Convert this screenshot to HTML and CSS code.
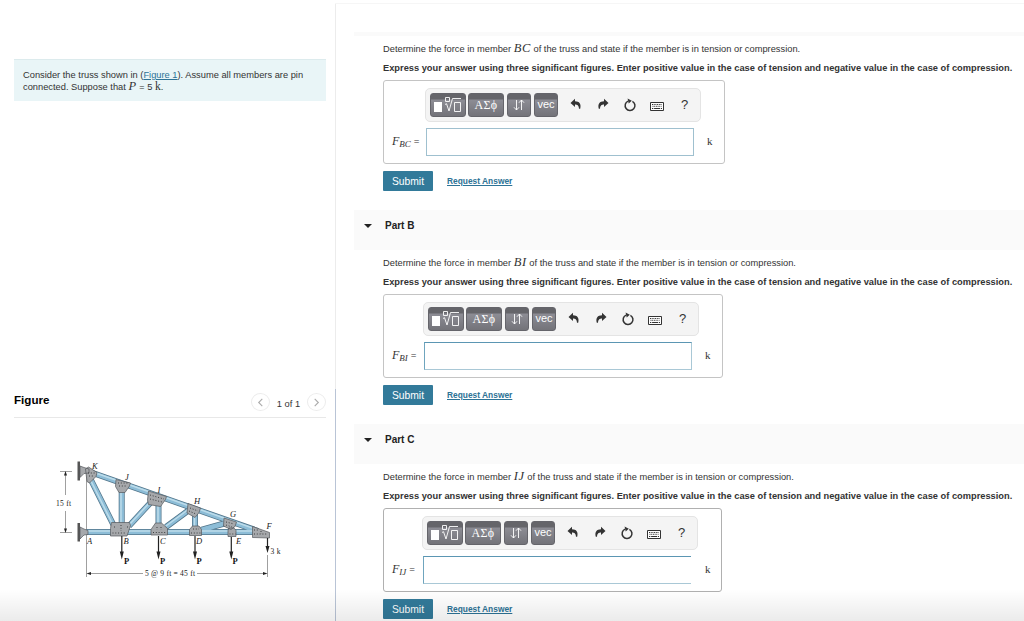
FILE: index.html
```html
<!DOCTYPE html>
<html lang="en">
<head>
<meta charset="utf-8">
<title>Truss</title>
<link rel="stylesheet" href="styles.css">
</head>
<body>
<svg width="0" height="0" class="defs" aria-hidden="true">
  <symbol id="undo" viewBox="0 0 12 12"><path d="M5 0.8 0.5 5 5 9V6.6c2.300 0 3.700.8 4 4.200h1.200C11.500 6 9.300 3.300 5 3.300z"/></symbol>
  <symbol id="redo" viewBox="0 0 12 12"><path d="M7 .8 11.500 5 7 9V6.600c-2.300 0-3.700.8-4 4.200H1.800C.5 6 2.700 3.300 7 3.300z"/></symbol>
  <symbol id="reset" viewBox="0 0 14 14"><path d="M9.400 3.300a4.900 4.900 0 1 1-4.300-.2" fill="none" stroke="currentColor" stroke-width="1.500"/><path d="M4.600.6 8.800 2.700 5.700 5.600z"/></symbol>
  <symbol id="keys" viewBox="0 0 14 9"><path d="M.5.5h13v8H.5z" fill="#fff" stroke="currentColor"/><path d="M2 2.500h10M2.500 4.300h9" fill="none" stroke="currentColor" stroke-dasharray="1 .7"/><path d="M2 6.500h1.300m.8 0H10m.8 0H12" fill="none" stroke="currentColor"/></symbol>
  <symbol id="root" viewBox="0 0 28 18"><path d="M0 6h8v10H0z"/><path d="M11.500 1.500h4v4h-4zM20.500 6.500h6v9h-6zM11 8.500l1.500-.8 2.500 7.300 3.500-12.500H27" fill="none" stroke="currentColor" stroke-width=".9"/></symbol>
  <symbol id="swap" viewBox="0 0 12 14"><path d="M3.500 2v10M1 9.300 3.500 12 6 9.300M8.500 12V2M6 4.700 8.500 2 11 4.700" fill="none" stroke="currentColor" stroke-width=".9"/></symbol>
</svg>
<div class="page">
  <aside class="side">
    <div class="problem">Consider the truss shown in (<a href="#">Figure 1</a>). Assume all members are pin<br>connected. Suppose that <i class="math">P</i> <span class="eq">=</span> 5 <span class="unit-in">k</span>.</div>
    <div class="figure-head">
      <h2>Figure</h2>
      <span class="nav"><svg viewBox="0 0 10 10"><path d="M7 1 3 5l4 4"/></svg></span>
      <span class="count">1 of 1</span>
      <span class="nav"><svg viewBox="0 0 10 10"><path d="M3 1l4 4-4 4"/></svg></span>
    </div>
    <svg class="truss" viewBox="50 455 240 130">
      <g class="thin"><path d="M86.500 471V577M267.500 555V577M60 471.500h12M60 532.500h12M65.500 474v21M65.500 511v18M89 573.500h54M197 573.500h68"/></g>
      <g class="tips"><path d="M65.500 471l-1.500 4.500h3zM65.500 533l-1.500-4.500h3zM86.500 573.500l4.500-1.500v3zM267.500 573.500l-4.500-1.500v3z"/></g>
      <g class="edge"><path d="M90 472 258 531M86 532H256M90 478 114 526M121.700 488V526M129 526 153 500M158.500 505V526M166 527 189 510M195 514V528M201 530 226 523M231 525V530"/></g>
      <g class="beam"><path d="M90 472 258 531M86 532H256M90 478 114 526M121.700 488V526M129 526 153 500M158.500 505V526M166 527 189 510M195 514V528M201 530 226 523M231 525V530"/></g>
      <g class="shine"><path d="M90 471 258 530M86 531H256M89.500 478 113.500 526M121 488V526M129 525 153 499M158 505V526M166 526 189 509M194.500 514V528"/></g>
      <g class="wall"><path d="M77.500 461.500h2.500v19h-2.500zM77.500 523h2.500v18.500h-2.500z"/></g>
      <g class="plate">
        <path d="M80 466l4 1.500 5 1.500v4l-5 .5-4 4zM80 527l4 2 4 1.500v4l-4 .5-4 4zM85.500 469l3-2 8.500 5.500-1 4-6.500 6.500-2.500-1.500zM116 479.500l14.500 3.500-1 3-4.500 6.500h-6l-3.500-6zM148.500 491l18 5.500-1 3-5 7-12-2-1-4.500zM188 503.500l12.500 4.500-1.500 4.500-4 5-8-4.500zM224 518l12.500 4-1.500 4.500-4 3-7.500-3.500zM111.500 522.500h18l1 3-3.500 10.500h-16.500v-7.500zM155.500 523h6l6 5.500v6.500h-16.500v-5.500zM192.500 526h6.500l2.500 3.500v6h-12v-6zM229 528h5l2 2.500v6h-8v-6zM252.500 526.500l17 6v5.500l-17-.5z"/>
      </g>
      <g class="bolts"><path d="M88 473h7M89 476h5M118 483h11M119 486h8M150 495l14 4M150 499l12 3M190 508l8 3M189 511l7 3M226 522l8 2M226 525l6 2M112.500 533h14M114 527h1M121 525v6M127 527h1M153 532.500h13M157 527v3M161 527v3M191 533h10M193 529h6M229.500 534h6M254 530h4M254 534h14M261 531v3"/></g>
      <g class="load"><path d="M121.800 536v17M158.500 536v17M195 536v17M231.300 537v16M267.500 538v9"/></g>
      <g class="tips"><path d="M119.800 551.500h4l-2 8zM156.500 551.500h4l-2 8zM193 551.500h4l-2 8zM229.300 551.500h4l-2 8zM265.500 546h4l-2 7z"/></g>
      <g class="names"><text x="92" y="469">K</text><text x="125" y="480">J</text><text x="157.500" y="492.500">I</text><text x="194" y="504">H</text><text x="230" y="517">G</text><text x="266.500" y="528.500">F</text><text x="87" y="543.500">A</text><text x="123.500" y="543.500">B</text><text x="160" y="543.500">C</text><text x="196" y="543.500">D</text><text x="236" y="543.500">E</text></g>
      <g class="force"><text x="124" y="564">P</text><text x="160" y="564">P</text><text x="196.500" y="564">P</text><text x="232.500" y="564">P</text></g>
      <g class="dims"><text x="56" y="505.500" textLength="15">15 ft</text><text x="270.500" y="554" textLength="10">3 k</text><text x="145" y="576" textLength="50">5 @ 9 ft = 45 ft</text></g>
    </svg>
  </aside>
  <main class="main" id="main">
    <div class="rule"></div>
    <section class="part part-a">
      <p class="ask">Determine the force in member <i class="math">BC</i> of the truss and state if the member is in tension or compression.</p>
      <p class="hint">Express your answer using three significant figures. Enter positive value in the case of tension and negative value in the case of compression.</p>
      <div class="box">
        <div class="label"><i>F<sub>BC</sub></i> <span>=</span></div>
        <div class="entry">
          <div class="tools"><b class="btn wide"><svg class="i-root"><use href="#root"/></svg></b><b class="btn wide greek">ΑΣϕ</b><b class="btn"><svg class="i-swap"><use href="#swap"/></svg></b><b class="btn vec">vec</b><svg class="ic undo"><use href="#undo"/></svg><svg class="ic redo"><use href="#redo"/></svg><svg class="ic reset"><use href="#reset"/></svg><svg class="ic keys"><use href="#keys"/></svg><span class="help">?</span></div>
          <div class="field"></div>
        </div>
        <span class="unit">k</span>
      </div>
      <div class="actions"><button>Submit</button><a href="#">Request Answer</a></div>
    </section>
    <header class="part-head"><span class="caret"></span><h3>Part B</h3></header>
    <section class="part part-b">
      <p class="ask">Determine the force in member <i class="math">BI</i> of the truss and state if the member is in tension or compression.</p>
      <p class="hint">Express your answer using three significant figures. Enter positive value in the case of tension and negative value in the case of compression.</p>
      <div class="box">
        <div class="label"><i>F<sub>BI</sub></i> <span>=</span></div>
        <div class="entry">
          <div class="tools"><b class="btn wide"><svg class="i-root"><use href="#root"/></svg></b><b class="btn wide greek">ΑΣϕ</b><b class="btn"><svg class="i-swap"><use href="#swap"/></svg></b><b class="btn vec">vec</b><svg class="ic undo"><use href="#undo"/></svg><svg class="ic redo"><use href="#redo"/></svg><svg class="ic reset"><use href="#reset"/></svg><svg class="ic keys"><use href="#keys"/></svg><span class="help">?</span></div>
          <div class="field"></div>
        </div>
        <span class="unit">k</span>
      </div>
      <div class="actions"><button>Submit</button><a href="#">Request Answer</a></div>
    </section>
    <header class="part-head"><span class="caret"></span><h3>Part C</h3></header>
    <section class="part part-c">
      <p class="ask">Determine the force in member <i class="math">IJ</i> of the truss and state if the member is in tension or compression.</p>
      <p class="hint">Express your answer using three significant figures. Enter positive value in the case of tension and negative value in the case of compression.</p>
      <div class="box">
        <div class="label"><i>F<sub>IJ</sub></i> <span>=</span></div>
        <div class="entry">
          <div class="tools"><b class="btn wide"><svg class="i-root"><use href="#root"/></svg></b><b class="btn wide greek">ΑΣϕ</b><b class="btn"><svg class="i-swap"><use href="#swap"/></svg></b><b class="btn vec">vec</b><svg class="ic undo"><use href="#undo"/></svg><svg class="ic redo"><use href="#redo"/></svg><svg class="ic reset"><use href="#reset"/></svg><svg class="ic keys"><use href="#keys"/></svg><span class="help">?</span></div>
          <div class="field"></div>
        </div>
        <span class="unit">k</span>
      </div>
      <div class="actions"><button>Submit</button><a href="#">Request Answer</a></div>
    </section>
  </main>
  <div class="fade"></div>
</div>
</body>
</html>
```
FILE: styles.css
```css
* { box-sizing: border-box; }
body { margin: 0; background: #fff; color: #333; font: 9.3px "Liberation Sans", sans-serif; overflow: hidden; }
h2, h3, p { margin: 0; }
a { color: #2d7396; }
.defs { position: absolute; }
.page { position: relative; display: flex; height: 621px; padding-top: 3px; overflow: hidden; }

.side { width: 336px; padding-left: 14px; border-image: linear-gradient(#ececec 386px, #b9c4d6 386px) 1; border-style: solid; border-width: 0 1px 0 0; display: flex; flex-direction: column; }
.problem { width: 312px; height: 42px; margin-top: 56px; padding: 10px 9px; background: #e9f5f7; border-top: 1px solid #dcebed; line-height: 11px; white-space: nowrap; }
.math { font: italic 12.500px/10px "Liberation Serif", serif; letter-spacing: .6px; }
.unit-in { font: 11.500px/10px "Liberation Serif", serif; }
.eq { font-size: 9px; }
.figure-head { display: flex; width: 312px; height: 30px; margin-top: 287px; padding-bottom: 1px; border-bottom: 1px solid #e8e8e8; align-items: center; }
.figure-head h2 { flex: 1; color: #000; font-size: 11.600px; line-height: 12px; margin-top: -4px; }
.nav { width: 19px; height: 18px; border: 1px solid #ececec; border-radius: 50%; display: flex; align-items: center; justify-content: center; }
.nav svg { width: 9px; height: 9px; fill: none; stroke: #aaa; stroke-width: 1.200; }
.count { width: 37px; text-align: center; padding-top: 3px; }
.truss { width: 240px; height: 130px; margin: 37px 0 0 36px; font-family: "Liberation Serif", serif; }
.thin { stroke: #777; stroke-width: .7; fill: none; }
.edge { stroke: #52758a; stroke-width: 6; fill: none; }
.beam { stroke: #8dbdd7; stroke-width: 4.500; fill: none; }
.shine { stroke: #bddcea; stroke-width: 1.500; fill: none; }
.wall { fill: #555; }
.plate { fill: #a6a8ab; stroke: #55585b; stroke-width: .7; }
.bolts { stroke: #3d3f41; stroke-width: 1; stroke-dasharray: 1 1.800; fill: none; }
.load { stroke: #222; stroke-width: 1.200; }
.tips { fill: #222; }
.names { font-size: 8.500px; font-style: italic; fill: #222; }
.force { font-size: 8.500px; font-weight: bold; fill: #111; }
.dims { font-size: 7.500px; fill: #222; }

.main { flex: 1; min-width: 0; padding-left: 19px; border-top: 1px solid #f6f6f6; margin-left: -1px; }
.rule { height: 4px; margin-top: 28px; background: #fafafa; }
.part { height: 174px; padding-left: 29px; white-space: nowrap; }
.ask { padding-top: 7px; line-height: 12px; height: 22px; }
.hint { font-weight: bold; line-height: 12px; height: 22px; padding-top: 4px; font-size: 9.290px; }
.box { display: flex; height: 84px; width: 342px; border: 1px solid #c4c4c4; border-radius: 3px; }
.label { width: 42px; padding: 53px 0 0 8px; font: 12px/14px "Liberation Serif", serif; }
.label span { font-size: 10px; }
.label sub { font-size: 9px; line-height: 0; vertical-align: -2px; }
.tools { display: flex; width: 276px; height: 34px; margin: 7px 0 6px -1px; padding: 4px 0 0 4px; background: #f4f4f4; border: 1px solid #e4e4e4; border-radius: 5px; }
.btn { width: 24px; height: 24px; margin-right: 3px; border: 1px solid #65656b; border-radius: 3px; background: linear-gradient(#65656a 22%, #8c8c94 28%, #737379); color: #fff; font-weight: normal; font-size: 11px; line-height: 21px; text-align: center; display: flex; align-items: center; justify-content: center; }
.vec { padding-bottom: 2px; }
.wide { width: 36px; margin-right: 2px; }
.greek { font-family: "Liberation Serif", serif; font-size: 12px; letter-spacing: .3px; margin-right: 3px; -webkit-font-smoothing: antialiased; }
.i-root { width: 28px; height: 18px; fill: #fff; color: #fff; }
.i-swap { width: 12px; height: 14px; }
.ic { fill: #333; color: #333; }
.undo, .redo { width: 12px; height: 12px; margin: 5px 0 0 9px; }
.redo { margin-left: 15px; }
.reset { width: 14px; height: 14px; margin: 5px 0 0 14px; }
.keys { width: 14px; height: 9px; margin: 9px 0 0 13px; }
.help { font-size: 13px; line-height: 24px; margin-left: 17px; }
.field { width: 268px; height: 28px; border: 1px solid #9fc0cf; }
.unit { width: 8px; font: 11px/14px "Liberation Serif", serif; margin-top: 53px; margin-left: 5px; }
.actions { display: flex; align-items: center; height: 20px; margin-top: 7px; }
.actions button { width: 50px; height: 20px; border: 0; padding: 0; background: #327a9a; color: #fff; border-radius: 1px; font: 10.300px "Liberation Sans", sans-serif; }
.actions a { font-weight: bold; font-size: 8.400px; margin-left: 14px; }
.part-head { display: flex; height: 40px; padding: 10px 0 0 10px; background: #fafafa; }
.part-head h3 { font-size: 10px; line-height: 12px; color: #222; margin-left: 13px; }
.caret { width: 8px; height: 4px; margin-top: 4px; background: #222; clip-path: polygon(0 0, 100% 0, 50% 100%); }
.entry { width: 276px; flex: none; }
.part-b .label { width: 40px; }
.part-b .box { width: 340px; }
.part-c .label { width: 39px; }
.part-c .box { width: 339px; border-color: #b0b0b0; }
.part-b .field, .part-c .field { border-color: #5b96b3 #a9c8d6 #a9c8d6 #6fa5be; }
.part-c .unit { margin-left: 6px; }
.part-c .field { border-right: 0; }
.fade { position: absolute; left: 0; right: 0; bottom: 0; height: 32px; background: linear-gradient(rgba(0,0,0,0), rgba(0,0,0,.08)); pointer-events: none; }
```
